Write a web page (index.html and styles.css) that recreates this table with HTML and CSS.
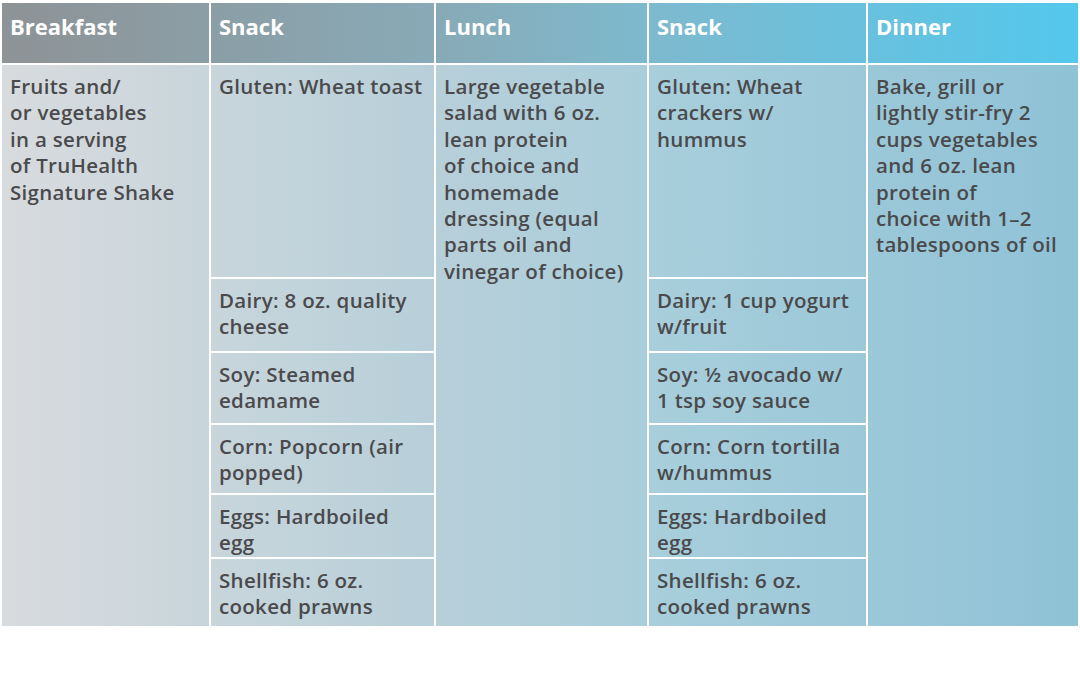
FILE: index.html
```html
<!DOCTYPE html>
<html>
<head>
<meta charset="utf-8">
<link rel="stylesheet" href="styles.css">
</head>
<body>
<div class="table">
  <div class="hd c1">Breakfast</div>
  <div class="hd c2">Snack</div>
  <div class="hd c3">Lunch</div>
  <div class="hd c4">Snack</div>
  <div class="hd c5">Dinner</div>

  <div class="cell span c1">Fruits and/<br>or vegetables<br>in a serving<br>of TruHealth<br>Signature Shake</div>
  <div class="cell c2">Gluten: Wheat toast</div>
  <div class="cell span c3">Large vegetable<br>salad with 6 oz.<br>lean protein<br>of choice and<br>homemade<br>dressing (equal<br>parts oil and<br>vinegar of choice)</div>
  <div class="cell c4">Gluten: Wheat<br>crackers w/<br>hummus</div>
  <div class="cell span c5">Bake, grill or<br>lightly stir-fry 2<br>cups vegetables<br>and 6 oz. lean<br>protein of<br>choice with 1–2<br>tablespoons of oil</div>

  <div class="cell c2">Dairy: 8 oz. quality<br>cheese</div>
  <div class="cell c4">Dairy: 1 cup yogurt<br>w/fruit</div>

  <div class="cell c2">Soy: Steamed<br>edamame</div>
  <div class="cell c4">Soy: ½ avocado w/<br>1 tsp soy sauce</div>

  <div class="cell c2">Corn: Popcorn (air<br>popped)</div>
  <div class="cell c4">Corn: Corn tortilla<br>w/hummus</div>

  <div class="cell c2">Eggs: Hardboiled<br>egg</div>
  <div class="cell c4">Eggs: Hardboiled<br>egg</div>

  <div class="cell c2">Shellfish: 6 oz.<br>cooked prawns</div>
  <div class="cell c4">Shellfish: 6 oz.<br>cooked prawns</div>
</div>
</body>
</html>
```

FILE: styles.css
```css
html, body {
  margin: 0;
  padding: 0;
  background: #ffffff;
}
body {
  padding: 3px 0 0 2px;
  font-family: "Open Sans", "Liberation Sans", sans-serif;
}
.table {
  display: grid;
  grid-template-columns: 207px 223px 211px 217px 210px;
  grid-template-rows: 60px 212px 72px 70px 68px 62px 67px;
  column-gap: 2px;
  row-gap: 2px;
  width: 1076px;
}
.c1 { grid-column: 1; }
.c2 { grid-column: 2; }
.c3 { grid-column: 3; }
.c4 { grid-column: 4; }
.c5 { grid-column: 5; }
.span { grid-row: 2 / 8; }
.hd {
  grid-row: 1;
  background: linear-gradient(to right, #8e9396 0px, #88aab7 440px, #7dbacf 660px, #53c8ed 1080px) fixed;
  color: #ffffff;
  font-weight: 700;
  font-size: 22px;
  line-height: 26px;
  padding: 10px 8px 0 8px;
  white-space: nowrap;
}
.cell {
  background: linear-gradient(to right, #d8dbde 0px, #b7cfd9 440px, #a8cedb 660px, #8fc2d6 1080px) fixed;
  color: #4a4a4c;
  font-weight: 600;
  font-size: 20.5px;
  line-height: 26.4px;
  letter-spacing: 0.3px;
  padding: 8px 0 0 8px;
  white-space: nowrap;
}
```
